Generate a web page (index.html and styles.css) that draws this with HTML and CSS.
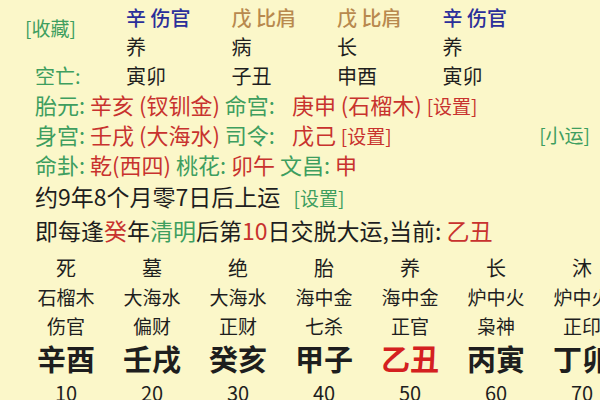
FILE: index.html
```html
<!DOCTYPE html>
<html lang="zh">
<head>
<meta charset="utf-8">
<link rel="stylesheet" href="styles.css">
</head>
<body>
<div class="page">
  <div class="pillars">
    <div class="fav green">[收藏]</div>
    <div class="cell blue strong">辛 伤官</div>
    <div class="cell brown strong">戊 比肩</div>
    <div class="cell brown strong">戊 比肩</div>
    <div class="cell blue strong">辛 伤官</div>
    <div class="cell">养</div>
    <div class="cell">病</div>
    <div class="cell">长</div>
    <div class="cell">养</div>
    <div class="label green">空亡:</div>
    <div class="cell">寅卯</div>
    <div class="cell">子丑</div>
    <div class="cell">申酉</div>
    <div class="cell">寅卯</div>
  </div>
  <div class="info">
    <div class="line"><span class="green">胎元:</span> <span class="red">辛亥 (钗钏金)</span> <span class="green">命宫:</span> <span class="red wide">庚申 (石榴木)</span> <span class="red small">[设置]</span></div>
    <div class="line"><span class="green small xiao">[小运]</span><span class="green">身宫:</span> <span class="red">壬戌 (大海水)</span> <span class="green">司令:</span> <span class="red wide">戊己</span> <span class="red small">[设置]</span></div>
    <div class="line"><span class="green">命卦:</span> <span class="red">乾(西四)</span> <span class="green">桃花:</span> <span class="red">卯午</span> <span class="green">文昌:</span> <span class="red">申</span></div>
  </div>
  <div class="yun">
    <div class="yline">约9年8个月零7日后上运 <span class="green small gap">[设置]</span></div>
    <div class="yline">即每逢<span class="red">癸</span>年<span class="green">清明</span>后第<span class="red">10</span>日交脱大运,当前: <span class="red">乙丑</span></div>
  </div>
  <div class="dayun">
    <div class="col"><div class="r1">死</div><div class="r2">石榴木</div><div class="r3">伤官</div><div class="r4">辛酉</div><div class="r5">10</div></div>
    <div class="col"><div class="r1">墓</div><div class="r2">大海水</div><div class="r3">偏财</div><div class="r4">壬戌</div><div class="r5">20</div></div>
    <div class="col"><div class="r1">绝</div><div class="r2">大海水</div><div class="r3">正财</div><div class="r4">癸亥</div><div class="r5">30</div></div>
    <div class="col"><div class="r1">胎</div><div class="r2">海中金</div><div class="r3">七杀</div><div class="r4">甲子</div><div class="r5">40</div></div>
    <div class="col"><div class="r1">养</div><div class="r2">海中金</div><div class="r3">正官</div><div class="r4 cur">乙丑</div><div class="r5">50</div></div>
    <div class="col"><div class="r1">长</div><div class="r2">炉中火</div><div class="r3">枭神</div><div class="r4">丙寅</div><div class="r5">60</div></div>
    <div class="col"><div class="r1">沐</div><div class="r2">炉中火</div><div class="r3">正印</div><div class="r4">丁卯</div><div class="r5">70</div></div>
  </div>
</div>
</body>
</html>
```
FILE: styles.css
```css
html, body {
  margin: 0;
  padding: 0;
  background: #fbf7c9;
}
body {
  width: 600px;
  height: 400px;
  overflow: hidden;
  font-family: "Noto Sans CJK SC", "Noto Sans", sans-serif;
  color: #1e1e1e;
}
.page {
  padding-top: 3px;
}
.green { color: #3e9e5f; }
.red { color: #c8322e; }
.blue { color: #2b2f9a; }
.brown { color: #b8894e; }
.strong { font-weight: 500; }

.pillars {
  display: grid;
  grid-template-columns: 101px repeat(4, 105.5px);
  grid-auto-rows: 29px;
  padding-left: 25px;
  font-size: 20px;
  line-height: 29px;
}
.fav {
  grid-row: 1 / span 2;
  grid-column: 1;
  align-self: start;
  margin-top: 10px;
  font-size: 19px;
}
.cell { white-space: nowrap; }
.label { padding-left: 10px; }

.info {
  padding-left: 35px;
  font-size: 22px;
  line-height: 29px;
}
.line {
  white-space: pre;
}
.small { font-size: 19px; }
.wide { margin-left: 12px; }
.xiao { float: right; margin-right: 10px; }

.yun {
  padding-left: 35px;
  margin-top: 1px;
  font-size: 23px;
  line-height: 33px;
}
.yline { white-space: pre; }
.gap { margin-left: 8px; }

.dayun {
  display: grid;
  grid-template-columns: repeat(7, 86px);
  padding-left: 23px;
  margin-top: 6px;
  text-align: center;
}
.col { white-space: nowrap; }
.r1, .r2, .r3 { font-size: 19px; line-height: 29px; }
.r1 { font-size: 20px; }
.r4 { font-size: 29px; font-weight: 700; line-height: 36px; }
.r5 { font-size: 20px; line-height: 34px; }
.cur { color: #d42020; }
```
